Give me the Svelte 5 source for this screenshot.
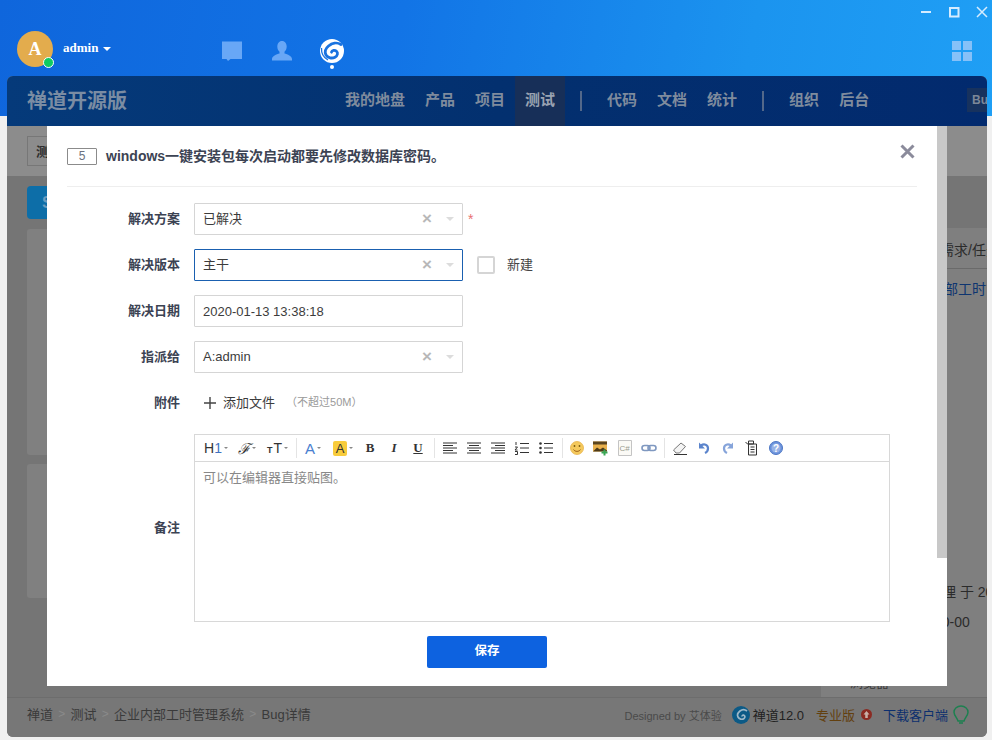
<script>
  const navA = ['我的地盘', '产品', '项目'];
  const navB = ['代码', '文档', '统计'];
  const navC = ['组织', '后台'];
</script>

<div class="page">
  <header class="titlebar">
    <div class="winctl">
      <svg width="12" height="12" viewBox="0 0 12 12"><path d="M1 6h10" stroke="#d5ecff" stroke-width="2"/></svg>
      <svg width="12" height="12" viewBox="0 0 12 12"><rect x="2" y="2" width="8.500" height="8.500" fill="none" stroke="#d5ecff" stroke-width="2"/></svg>
      <svg width="12" height="12" viewBox="0 0 12 12"><path d="M1 1l10 10M11 1L1 11" stroke="#d5ecff" stroke-width="1.500"/></svg>
    </div>
    <div class="user">
      <div class="avatar">A<span class="online"></span></div>
      <span class="uname">admin</span><span class="caret"></span>
    </div>
    <div class="apps">
      <svg width="22" height="22" viewBox="0 0 22 22"><path d="M1 1.500h20v17.500h-11.500l-2.500 2-1.500-2h-4.500z" fill="#68a7f6"/></svg>
      <svg width="22" height="22" viewBox="0 0 22 22"><path d="M11 1c3 0 4.700 2.500 4.700 5.500 0 2.400-1 4.200-2.200 5.300v1.700c3 .8 7.500 2.500 7.500 5.500v1.500H1v-1.500c0-3 4.500-4.700 7.500-5.500v-1.700C7.300 10.700 6.300 8.900 6.300 6.500 6.300 3.500 8 1 11 1z" fill="#68a7f6"/></svg>
      <div class="active-app">
        <svg width="24" height="24" viewBox="0 0 24 24"><circle cx="12" cy="12" r="12" fill="#fff"/><path d="M21 5.500C17 3 12 4 8.500 7 5.500 9.500 4.500 13 6 16c1.700 3 6 3.800 9 2.200 2.700-1.500 3.200-4.500 1.500-6-1.700-1.500-4.500-1-5 1" fill="none" stroke="#1a73e0" stroke-width="2.800" stroke-linecap="round"/><path d="M1.500 9c-.3 5 2 9.500 6.500 12" fill="none" stroke="#1a73e0" stroke-width="1.300"/></svg>
        <span class="dot"></span>
      </div>
    </div>
    <svg class="grid" width="20" height="20" viewBox="0 0 20 20" fill="#86c1f8"><rect width="9" height="9"/><rect x="11" width="9" height="9"/><rect y="11" width="9" height="9"/><rect x="11" y="11" width="9" height="9"/></svg>
  </header>

  <main class="window">
    <nav class="nav">
      <span class="brand">禅道开源版</span>
      <div class="menu">
        {#each navA as n}<span class="item">{n}</span>{/each}
        <span class="item cur">测试</span>
        <i class="sep"></i>
        {#each navB as n}<span class="item">{n}</span>{/each}
        <i class="sep"></i>
        {#each navC as n}<span class="item">{n}</span>{/each}
      </div>
      <span class="bugtag">Bug</span>
    </nav>
    <div class="sub"><span class="subbtn">测试</span></div>
    <div class="body">
      <div class="left">
        <div class="blue">S</div>
        <div class="card c1"></div>
        <div class="card c2"></div>
      </div>
      <aside class="right">
        <div class="rhead">需求/任务</div>
        <div class="rlink">内部工时管理</div>
        <div class="rgap"></div>
        <div class="rtext">理 于 2020</div>
        <div class="rtext2">00-00</div>
        <div class="rlast">浏览器</div>
      </aside>
    </div>
    <footer class="foot">
      <div class="crumbs">
        <span>禅道</span><b>&gt;</b><span>测试</span><b>&gt;</b><span>企业内部工时管理系统</span><b>&gt;</b><span>Bug详情</span>
      </div>
      <div class="fright">
        <span class="designed">Designed by 艾体验</span>
        <svg width="18" height="18" viewBox="0 0 18 18"><circle cx="9" cy="9" r="9" fill="#0c5a86"/><path d="M15 5c-2-1.500-5-1.500-7 0-2 1.500-3 4-2 6 1 2 4 3 6 1.500 1.500-1.200 1-3-.5-3.300-1-.2-1.500.5-1.300 1.200" fill="none" stroke="#9db8c8" stroke-width="1.700"/></svg>
        <span class="ver">禅道12.0</span>
        <span class="pro">专业版</span>
        <svg width="11" height="11" viewBox="0 0 13 13"><circle cx="6.500" cy="6.500" r="6.500" fill="#8b2a22"/><path d="M6.500 2.500l3.500 4H8v4H5v-4H3z" fill="#c9b0a8"/></svg>
        <span class="dl">下载客户端</span>
        <svg width="16" height="19" viewBox="0 0 16 19"><path d="M8 1c3.800 0 7 2.700 7 6.300 0 3-3.300 6-4 8.700H5C4.300 13.300 1 10.300 1 7.300 1 3.700 4.200 1 8 1zM6 18h4" fill="none" stroke="#1d8050" stroke-width="1.500"/></svg>
      </div>
    </footer>
  </main>

  <section class="modal">
    <div class="scroll"></div>
    <div class="mhead">
      <span class="idbox">5</span>
      <h2>windows一键安装包每次启动都要先修改数据库密码。</h2>
      <svg class="close" width="15" height="15" viewBox="0 0 15 15"><path d="M1.500 1.500l12 12M13.500 1.500l-12 12" stroke="#8b8b9b" stroke-width="3"/></svg>
    </div>
    <div class="form">
      <div class="row">
        <label>解决方案</label>
        <div class="field sel"><span class="cjk">已解决</span><em class="x">×</em><i class="tri"></i></div>
        <span class="req">*</span>
      </div>
      <div class="row">
        <label>解决版本</label>
        <div class="field sel focus"><span class="cjk">主干</span><em class="x">×</em><i class="tri"></i></div>
        <span class="chk"></span><span class="newt">新建</span>
      </div>
      <div class="row">
        <label>解决日期</label>
        <div class="field"><span>2020-01-13 13:38:18</span></div>
      </div>
      <div class="row">
        <label>指派给</label>
        <div class="field sel"><span class="latin">A:admin</span><em class="x">×</em><i class="tri"></i></div>
      </div>
      <div class="row attach">
        <label>附件</label>
        <svg class="plus" width="12" height="12" viewBox="0 0 12 12"><path d="M6 0v12M0 6h12" stroke="#444" stroke-width="1.400"/></svg>
        <span class="add">添加文件</span>
        <span class="limit">（不超过50M）</span>
      </div>
      <div class="row editor-row">
        <label>备注</label>
        <div class="editor">
          <div class="tools">
            <span class="t h1">H<span class="blue1">1</span><i class="m"></i></span>
            <span class="t ff"><i>ℱ</i><i class="m"></i></span>
            <span class="t tt"><small>T</small>T<i class="m"></i></span>
            <i class="div"></i>
            <span class="t ca">A<i class="m"></i></span>
            <span class="t hl"><span class="hlbox">A</span><i class="m"></i></span>
            <span class="t ic b">B</span>
            <span class="t ic it">I</span>
            <span class="t ic u">U</span>
            <i class="div"></i>
            <svg class="t svg" width="16" height="16" viewBox="0 0 16 14"><path d="M1 2h14M1 4.500h10M1 7h14M1 9.500h10M1 12h14" stroke="#333"/></svg>
            <svg class="t svg" width="16" height="16" viewBox="0 0 16 14"><path d="M1 2h14M3 4.500h10M1 7h14M3 9.500h10M1 12h14" stroke="#333"/></svg>
            <svg class="t svg" width="16" height="16" viewBox="0 0 16 14"><path d="M1 2h14M5 4.500h10M1 7h14M5 9.500h10M1 12h14" stroke="#333"/></svg>
            <svg class="t svg" width="16" height="16" viewBox="0 0 16 14"><path d="M6 2.500h9M6 7h9M6 11.500h9M2 1v3M1 6h2.500L1 9h2.500M1 10.500h2.500v3H1" stroke="#333" fill="none" stroke-width="1"/></svg>
            <svg class="t svg" width="16" height="16" viewBox="0 0 16 14"><path d="M6 2.500h9M6 7h9M6 11.500h9" stroke="#333"/><circle cx="2.500" cy="2.500" r="1.300" fill="#333"/><circle cx="2.500" cy="7" r="1.300" fill="#333"/><circle cx="2.500" cy="11.500" r="1.300" fill="#333"/></svg>
            <i class="div d2"></i>
            <svg class="t svg" width="16" height="16" viewBox="0 0 16 16"><circle cx="8" cy="8" r="6.500" fill="#f4c95d" stroke="#e8b34a" stroke-width=".8"/><circle cx="5.500" cy="6" r=".9" fill="#7a5a10"/><circle cx="10.500" cy="6" r=".9" fill="#7a5a10"/><path d="M4.500 9.500c1.500 2.500 5.500 2.500 7 0" fill="none" stroke="#a0641a" stroke-width="1"/></svg>
            <svg class="t svg" width="16" height="16" viewBox="0 0 16 15"><rect x="0" y="1" width="14" height="10" fill="#e8b04c"/><path d="M0 1h14v3H0z" fill="#5a4520"/><path d="M0 11l4-4 3 2 3-2 4 3v1z" fill="#4d3a18"/><path d="M11.500 9v6M8.500 12h6" stroke="#3aa655" stroke-width="2"/></svg>
            <svg class="t svg" width="16" height="16" viewBox="-1 0 16 16"><path d="M.5.500h13v15H.500z" fill="#fbfaf6" stroke="#c4c4c4"/><text x="1.500" y="11" font-size="8" font-family="Liberation Sans" fill="#9a9a8e">C#</text></svg>
            <svg class="t svg" width="16" height="16" viewBox="0 0 16 14"><rect x="1" y="4.500" width="8" height="5" rx="2.500" fill="none" stroke="#7f98c0" stroke-width="1.600"/><rect x="7" y="4.500" width="8" height="5" rx="2.500" fill="none" stroke="#7f98c0" stroke-width="1.600"/></svg>
            <i class="div d3"></i>
            <svg class="t svg" width="16" height="16" viewBox="0 0 16 15"><path d="M1.500 9.500L9 2.500l4.500 3.500-6 6.500H4z" fill="#f4f4f4" stroke="#777"/><path d="M2 14h13" stroke="#333"/></svg>
            <svg class="t svg" width="16" height="16" viewBox="0 0 16 15"><path d="M5 5c3-2 7-1 7 3 0 2-1 3.500-3 4.500" fill="none" stroke="#5b84cc" stroke-width="2.200"/><path d="M3 2v6h6z" fill="#5b84cc"/></svg>
            <svg class="t svg" width="16" height="16" viewBox="0 0 16 15"><path d="M11 5c-3-2-7-1-7 3 0 2 1 3.500 3 4.500" fill="none" stroke="#86a4da" stroke-width="2.200"/><path d="M13 2v6H7z" fill="#86a4da"/></svg>
            <svg class="t svg" width="16" height="16" viewBox="0 0 15 16"><path d="M1 2l2 2h9v11H4V4" fill="#f8f8f8" stroke="#333"/><path d="M4 1h5v3H4zM6 7h4M6 9.500h4M6 12h4" stroke="#333" fill="none"/></svg>
            <svg class="t svg" width="16" height="16" viewBox="0 0 16 16"><circle cx="8" cy="8" r="6.500" fill="#6c93dc" stroke="#4d77c4"/><circle cx="8" cy="8" r="4.500" fill="#fff" opacity=".3"/><text x="8" y="11.500" text-anchor="middle" font-size="10" font-weight="700" font-family="Liberation Sans" fill="#fff">?</text></svg>
          </div>
          <div class="area">可以在编辑器直接贴图。</div>
        </div>
      </div>
      <div class="actions"><button>保存</button></div>
    </div>
  </section>
</div>

<style>
  :global(body) {
    margin: 0;
    background: #f0f0f0;
  }
  .page {
    --cjk: "Liberation Sans", "Noto Sans CJK SC", sans-serif;
    position: relative;
    width: 992px;
    height: 740px;
    overflow: hidden;
    font-family: var(--cjk);
    font-size: 13px;
    background: #f0f0f0;
  }
  .page::before {
    content: "";
    position: absolute;
    left: 0;
    right: 0;
    top: 0;
    height: 116px;
    background: linear-gradient(100deg, #0f66dc 0%, #1274e6 40%, #1b94ef 75%, #1f9ff5 100%);
  }
  .titlebar {
    position: relative;
    height: 76px;
  }
  .winctl {
    position: absolute;
    right: 4px;
    top: 6px;
    display: flex;
    gap: 16px;
  }
  .user {
    position: absolute;
    left: 17px;
    top: 31px;
    display: flex;
    align-items: center;
    color: #fff;
  }
  .avatar {
    position: relative;
    width: 36px;
    height: 36px;
    border-radius: 50%;
    background: #e3ac4d;
    text-align: center;
    font: 700 18px/36px "Liberation Serif", serif;
    margin-right: 10px;
  }
  .online {
    position: absolute;
    right: -1px;
    bottom: -1px;
    width: 9px;
    height: 9px;
    border-radius: 50%;
    background: #0fcb62;
    border: 1px solid #fff;
  }
  .uname {
    font: 700 13px "Liberation Serif", serif;
    margin-top: -2px;
  }
  .caret {
    margin-left: 5px;
    border: 4px solid transparent;
    border-top-color: #fff;
    border-bottom: 0;
  }
  .apps {
    position: absolute;
    left: 221px;
    top: 40px;
    display: flex;
    gap: 28px;
  }
  .active-app {
    position: relative;
    margin-top: -1px;
    margin-left: -1px;
    width: 24px;
    height: 30px;
  }
  .active-app svg { display: block; }
  .dot {
    position: absolute;
    left: 10px;
    top: 26px;
    width: 4px;
    height: 4px;
    border-radius: 50%;
    background: #fff;
  }
  .grid {
    position: absolute;
    left: 952px;
    top: 41px;
  }
  .window {
    position: relative;
    margin-left: 7px;
    width: 980px;
    height: 661px;
    border-radius: 6px;
    overflow: hidden;
    background: #7e7e7e;
    display: flex;
    flex-direction: column;
  }
  .nav {
    height: 50px;
    flex: none;
    background: linear-gradient(90deg, #053a7a, #03306f 50%, #022a6e);
    display: flex;
    align-items: center;
    padding-left: 20px;
    position: relative;
  }
  .brand {
    font-size: 20px;
    font-weight: 700;
    color: #7a8ca3;
    width: 308px;
    flex: none;
    margin-bottom: 4px;
  }
  .menu {
    display: flex;
    align-items: center;
    font-size: 15px;
    font-weight: 700;
    height: 50px;
  }
  .item {
    padding: 0 10px;
    height: 50px;
    line-height: 48px;
    color: #7f8b9d;
    white-space: nowrap;
  }
  .item.cur {
    background: #172f58;
    color: #9aa3b2;
  }
  .sep {
    width: 2px;
    height: 20px;
    background: #53688a;
    margin: 0 15px;
  }
  .bugtag {
    position: absolute;
    left: 960px;
    top: 12px;
    width: 20px;
    height: 24px;
    line-height: 24px;
    padding-left: 5px;
    overflow: hidden;
    background: #17325e;
    color: #7d8898;
    font-size: 12px;
    font-weight: 700;
    box-sizing: border-box;
  }
  .sub {
    height: 50px;
    flex: none;
    background: #8c8c8c;
    padding: 10px 20px;
    box-sizing: border-box;
  }
  .subbtn {
    display: block;
    width: 60px;
    height: 30px;
    line-height: 30px;
    padding-left: 8px;
    box-sizing: border-box;
    border: 1px solid #777;
    color: #2e2e2e;
    font-weight: 700;
  }
  .body {
    flex: 1;
    display: flex;
    justify-content: space-between;
    background: #757575;
    min-height: 0;
  }
  .left { width: 780px; padding: 10px 0 0 20px; box-sizing: border-box; }
  .blue {
    width: 60px;
    height: 33px;
    border-radius: 4px;
    background: #0d6ea8;
    color: #6a9cc0;
    font-weight: 700;
    font-size: 16px;
    line-height: 33px;
    padding-left: 15px;
    box-sizing: border-box;
  }
  .card {
    background: #808080;
    margin-top: 10px;
    border-radius: 3px;
    width: 100px;
  }
  .c1 { height: 226px; }
  .c2 { height: 134px; margin-top: 9px; }
  .right {
    width: 166px;
    margin-top: 52px;
    background: #7f7f7f;
    color: #2b2b2b;
    position: relative;
    display: flex;
    flex-direction: column;
    overflow: hidden;
    white-space: nowrap;
    padding-left: 119px;
    box-sizing: border-box;
    font-size: 14px;
  }
  .rhead {
    margin-top: 6px;
    line-height: 32px;
    width: 160px;
    height: 35px;
    border-bottom: 1px solid #6a6a6a;
    box-sizing: border-box;
    flex: none;
  }
  .rlink { margin-top: 11px; line-height: 18px; color: #0e3570; margin-left: -10px; }
  .rgap { height: 285px; flex: none; }
  .rtext { line-height: 18px; margin-left: 2px; }
  .rtext2 { margin-top: 12px; line-height: 18px; margin-left: -6px; }
  .rlast { position: absolute; left: 29px; top: 444px; color: #3a3a3a; font-size: 13px; }
  .foot {
    height: 40px;
    flex: none;
    background: #777;
    border-top: 1px solid #6d6d6d;
    box-sizing: border-box;
    display: flex;
    align-items: center;
    justify-content: space-between;
    padding: 0 18px 6px 20px;
    color: #3a3a3a;
  }
  .crumbs { display: flex; align-items: center; margin-bottom: 2px; }
  .crumbs b { font-weight: 400; color: #8a8a8a; margin: 0 5.250px; font-size: 12px; }
  .fright { display: flex; align-items: center; }
  .designed { font-size: 11px; color: #4a4a4a; margin-right: 10px; }
  .ver { font-size: 13px; color: #222; margin: 0 12px 0 3px; }
  .pro { color: #63400f; margin-right: 6px; font-size: 13px; }
  .dl { color: #0c2f6e; margin: 0 5px 0 11px; font-size: 13px; }
  .modal {
    position: absolute;
    left: 47px;
    top: 126px;
    width: 900px;
    height: 560px;
    background: #fff;
    box-sizing: border-box;
    padding: 0 30px 0 20px;
    color: #3c4353;
  }
  .scroll {
    position: absolute;
    right: 0;
    top: 0;
    width: 10px;
    height: 432px;
    background: #c8c8c8;
  }
  .mhead {
    position: relative;
    height: 60px;
    border-bottom: 1px solid #eee;
    display: flex;
    align-items: center;
    gap: 9px;
  }
  .idbox {
    width: 28px;
    height: 15px;
    line-height: 15px;
    text-align: center;
    border: 1px solid #8b8b8b;
    color: #6c7280;
    font-size: 12px;
    border-radius: 1px;
  }
  h2 { margin: 0 0 3px; font-size: 14px; font-weight: 700; color: #3c4353; }
  .close { position: absolute; right: 2px; top: 18px; }
  .form { padding-top: 12px; }
  .row {
    display: flex;
    align-items: center;
    height: 40px;
    margin-bottom: 6px;
  }
  label {
    width: 113px;
    text-align: right;
    font-size: 13px;
    font-weight: 700;
    color: #3c4353;
    margin: 0 14px 4px 0;
    flex: none;
  }
  .field {
    width: 269px;
    height: 32px;
    border: 1px solid #d5d5d5;
    box-sizing: border-box;
    border-radius: 1px;
    display: flex;
    align-items: center;
    padding-left: 8px;
    color: #3c3c3c;
    font-size: 13px;
    position: relative;
  }
  .cjk { margin-bottom: 4px; }
  .latin { margin-bottom: 2px; }
  .focus { border-color: #1a60b0; }
  .x {
    position: absolute;
    left: 227px;
    top: 4px;
    font-style: normal;
    font-size: 17px;
    line-height: 22px;
    color: #b8b8b8;
    font-weight: 700;
  }
  .tri {
    position: absolute;
    right: 8px;
    top: 13px;
    border: 4px solid transparent;
    border-top-color: #dcdcdc;
    border-bottom: 0;
  }
  .req { color: #e87070; margin-left: 5px; font-size: 14px; }
  .chk {
    width: 14px;
    height: 14px;
    border: 2px solid #d5d5d5;
    border-radius: 2px;
    margin-left: 14px;
  }
  .newt { margin: 0 0 4px 12px; color: #444; font-size: 13px; }
  .attach { margin-bottom: 11px; }
  .plus { margin-left: 10px; }
  .add { margin: 0 0 4px 7px; font-size: 13px; color: #3c3c3c; }
  .limit { font-size: 11px; color: #9a9a9a; margin: 0 0 4px 11px; }
  .editor-row { height: 188px; margin-bottom: 14px; }
  .editor {
    width: 696px;
    height: 188px;
    border: 1px solid #d8d8d8;
    box-sizing: border-box;
  }
  .tools {
    height: 27px;
    border-bottom: 1px solid #d8d8d8;
    display: flex;
    align-items: center;
    padding-left: 9px;
    box-sizing: border-box;
  }
  .t { flex: none; display: flex; align-items: center; font-style: normal; color: #333; font-size: 14px; }
  .svg { margin: 0 4px; }
  .m {
    display: inline-block;
    margin-left: 2px;
    border: 2.500px solid transparent;
    border-top-color: #888;
    border-bottom: 0;
  }
  .h1 { width: 34px; }
  .blue1 { color: #3f72c0; }
  .ff { width: 29px; }
  .ff > i:first-child { font: italic 15px "DejaVu Serif", serif; }
  .tt { width: 29px; }
  .tt small { font-size: 9px; font-weight: 700; margin-top: 3px; margin-right: 1px; }
  .div { width: 1px; height: 20px; background: #e4e4e4; margin: 0 8px 0 0; flex: none; }
  .ca { color: #4a7fd0; width: 28px; font-size: 15px; }
  .hl { width: 25px; }
  .hlbox {
    width: 14px;
    height: 15px;
    line-height: 15px;
    text-align: center;
    background: #f8cc3c;
    border-radius: 2px;
    font-size: 13px;
  }
  .ic { width: 24px; justify-content: center; font: 700 13px "Liberation Serif", serif; box-sizing: border-box; }
  .it { font-style: italic; }
  .u { text-decoration: underline; margin-right: 4px; }
  .u + .div { margin-right: 3px; }
  .d2 { margin: 0 2px 0 4px; }
  .d3 { margin: 0 3px; }
  .area { padding: 5px 8px; font-size: 13px; color: #888; }
  .actions { text-align: center; }
  button {
    width: 120px;
    height: 32px;
    background: #0d62e0;
    border: 0;
    border-radius: 2px;
    color: #fff;
    font: 700 12.500px/28px var(--cjk);
    padding: 0 0 2px;
    margin-right: 10px;
  }
</style>
